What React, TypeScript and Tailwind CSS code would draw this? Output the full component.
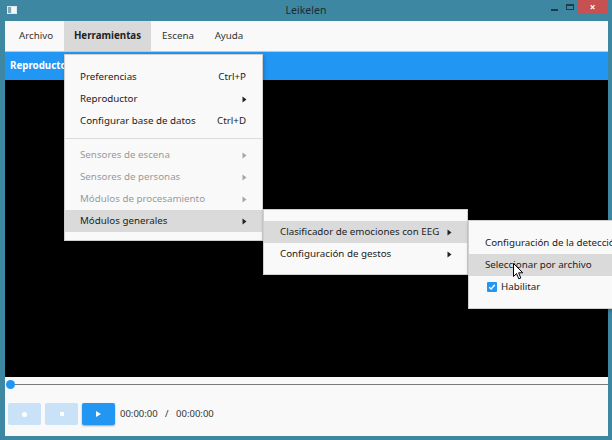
import React from "react";

const Arrow = ({ color = "#222" }: { color?: string }) => (
  <svg width="5" height="7" viewBox="0 0 5 7" className="shrink-0">
    <path d="M0.5 0.5 L4.5 3.5 L0.5 6.5 Z" fill={color} />
  </svg>
);

type Item = { label: string; shortcut?: string; sub?: boolean; disabled?: boolean; active?: boolean };

const MenuRow = ({ item, padL, arrowR }: { item: Item; padL: string; arrowR: string }) => (
  <div
    className={`h-[22px] flex items-center justify-between ${padL} ${arrowR} ${item.active ? "bg-[#dadada]" : ""} ${
      item.disabled ? "text-[#9a9a9a]" : "text-[#222]"
    }`}
  >
    <span className="whitespace-nowrap">{item.label}</span>
    {item.shortcut && <span className="whitespace-nowrap">{item.shortcut}</span>}
    {item.sub && <Arrow color={item.disabled ? "#a5a5a5" : "#222"} />}
  </div>
);

export default function App() {
  const font = { fontFamily: '"Noto Sans", "Open Sans", sans-serif' };
  return (
    <div className="w-[612px] h-[440px] bg-[#3d87a3] flex flex-col relative overflow-hidden text-[9.75px]" style={font}>
      {/* Title bar */}
      <div className="h-[21px] shrink-0 flex items-center relative">
        <svg width="10" height="8" viewBox="0 0 10 8" className="ml-[7px] -mt-[2px]">
          <rect x="0" y="0" width="10" height="8" fill="#dfe9ee" />
          <rect x="1" y="1" width="3" height="6" fill="#7fa9ba" />
          <rect x="5" y="1" width="4" height="6" fill="#f4f7f8" />
        </svg>
        <div className="absolute left-0 right-0 top-0 h-[21px] flex items-center justify-center text-[#1e2a30] text-[10.5px] pointer-events-none">
          Leikelen
        </div>
        <div className="ml-auto flex items-start h-full">
          <div className="w-[16px] h-[14px] flex items-center justify-center">
            <div className="w-[7px] h-[2px] bg-[#1f3b48] mt-[6px]" />
          </div>
          <div className="w-[16px] h-[14px] flex items-center justify-center">
            <div className="w-[8px] h-[6px] border border-[#1f3b48] border-t-2" />
          </div>
          <div className="w-[29px] h-[14px] bg-[#c75050] flex items-center justify-center text-white text-[10px] font-bold mr-[5px]">
            ×
          </div>
        </div>
      </div>

      {/* Window content */}
      <div className="flex-1 ml-[5px] mr-[4px] mb-[4px] flex flex-col bg-[#f9f9f9]">
        {/* Menu bar */}
        <div className="h-[31px] shrink-0 flex items-stretch text-[#333] border-b border-[#9fd0f7]">
          <div className="w-[59px] flex items-center justify-center pl-[3px]">Archivo</div>
          <div className="w-[87px] flex items-center justify-center bg-[#d9d9d9] font-bold text-[#222]">Herramientas</div>
          <div className="w-[52px] flex items-center justify-center pl-[2px]">Escena</div>
          <div className="w-[52px] flex items-center justify-center">Ayuda</div>
        </div>
        {/* Blue bar */}
        <div className="h-[28px] shrink-0 bg-[#2196f3] flex items-center pl-[5px] text-white font-bold text-[9.75px]">
          Reproductor
        </div>
        {/* Video */}
        <div className="h-[297px] shrink-0 bg-black" />
        {/* Controls */}
        <div className="flex-1 flex flex-col">
          <div className="h-[14px] relative flex items-center">
            <div className="h-px bg-[#7a7a7a] flex-1 ml-[5px]" />
            <div className="absolute left-[1px] top-[3px] w-[9px] h-[9px] rounded-full bg-[#2196f3]" />
          </div>
          <div className="flex items-center gap-[4px] mt-[12px] pl-[3px]">
            <div className="w-[33px] h-[22px] rounded-[2px] bg-[#c9e2f8] flex items-center justify-center">
              <div className="w-[5px] h-[5px] rounded-full bg-white" />
            </div>
            <div className="w-[33px] h-[22px] rounded-[2px] bg-[#c9e2f8] flex items-center justify-center">
              <div className="w-[4px] h-[4px] bg-white" />
            </div>
            <div className="w-[33px] h-[22px] rounded-[2px] bg-[#2196f3] shadow-[0_1px_2px_rgba(0,0,0,0.35)] flex items-center justify-center">
              <svg width="5" height="6" viewBox="0 0 5 6">
                <path d="M0 0 L5 3 L0 6 Z" fill="white" />
              </svg>
            </div>
            <div className="ml-[1px] text-[9.5px] text-[#333] whitespace-pre">00:00:00   /   00:00:00</div>
          </div>
        </div>
      </div>

      {/* Dropdown 1 */}
      <div className="absolute left-[64px] top-[54px] w-[199px] bg-[#f9f9f9] border border-[#cfcfcf] shadow-[1px_2px_4px_rgba(0,0,0,0.25)] pt-[11px] pb-[8px]">
        <MenuRow item={{ label: "Preferencias", shortcut: "Ctrl+P" }} padL="pl-[15px]" arrowR="pr-[16px]" />
        <MenuRow item={{ label: "Reproductor", sub: true }} padL="pl-[15px]" arrowR="pr-[15px]" />
        <MenuRow item={{ label: "Configurar base de datos", shortcut: "Ctrl+D" }} padL="pl-[15px]" arrowR="pr-[16px]" />
        <div className="h-[12px] flex items-center">
          <div className="h-px w-full bg-[#dcdcdc]" />
        </div>
        <MenuRow item={{ label: "Sensores de escena", sub: true, disabled: true }} padL="pl-[15px]" arrowR="pr-[15px]" />
        <MenuRow item={{ label: "Sensores de personas", sub: true, disabled: true }} padL="pl-[15px]" arrowR="pr-[15px]" />
        <MenuRow item={{ label: "Módulos de procesamiento", sub: true, disabled: true }} padL="pl-[15px]" arrowR="pr-[15px]" />
        <MenuRow item={{ label: "Módulos generales", sub: true, active: true }} padL="pl-[15px]" arrowR="pr-[15px]" />
      </div>

      {/* Dropdown 2 */}
      <div className="absolute left-[263px] top-[209px] w-[205px] bg-[#f9f9f9] border border-[#cfcfcf] shadow-[1px_2px_4px_rgba(0,0,0,0.25)] pt-[11px] pb-[9px]">
        <MenuRow item={{ label: "Clasificador de emociones con EEG", sub: true, active: true }} padL="pl-[16px]" arrowR="pr-[15px]" />
        <MenuRow item={{ label: "Configuración de gestos", sub: true }} padL="pl-[16px]" arrowR="pr-[15px]" />
      </div>

      {/* Dropdown 3 */}
      <div className="absolute left-[468px] top-[220px] w-[170px] bg-[#f9f9f9] border border-[#cfcfcf] shadow-[1px_2px_4px_rgba(0,0,0,0.25)] pt-[11px] pb-[10px]">
        <MenuRow item={{ label: "Configuración de la detección" }} padL="pl-[16px]" arrowR="pr-0" />
        <MenuRow item={{ label: "Seleccionar por archivo", active: true }} padL="pl-[16px]" arrowR="pr-0" />
        <div className="h-[22px] flex items-center pl-[18px] text-[#222]">
          <div className="w-[10px] h-[10px] bg-[#2196f3] rounded-[1px] flex items-center justify-center mr-[4px]">
            <svg width="8" height="8" viewBox="0 0 8 8">
              <path d="M1.2 4.2 L3.2 6 L6.8 1.8" stroke="white" strokeWidth="1.4" fill="none" />
            </svg>
          </div>
          <span>Habilitar</span>
        </div>
      </div>

      {/* Cursor */}
      <svg className="absolute left-[513px] top-[263px]" width="12" height="18" viewBox="0 0 12 18">
        <path d="M0.5 0.5 L0.5 13.5 L3.5 10.5 L5.8 15.8 L7.8 15 L5.6 9.8 L9.8 9.8 Z" fill="white" stroke="black" strokeWidth="1" />
      </svg>
    </div>
  );
}
